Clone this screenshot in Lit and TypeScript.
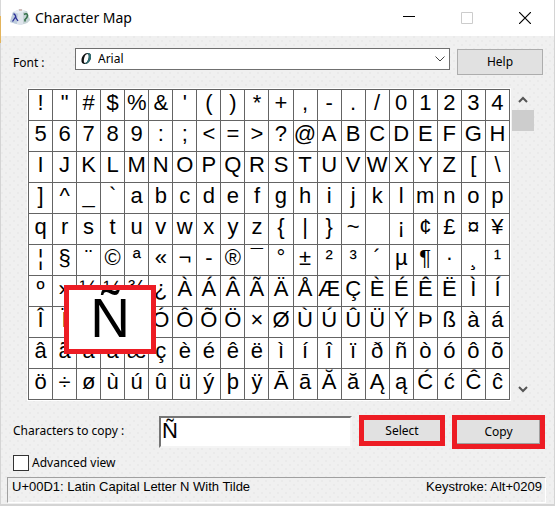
import { LitElement, html, css } from "lit";
import { customElement, state } from "lit/decorators.js";

const ROWS: string[] = [
  "!\"#$%&'()*+,-./01234",
  "56789:;<=>?@ABCDEFGH",
  "IJKLMNOPQRSTUVWXYZ[\\",
  "]^_`abcdefghijklmnop",
  "qrstuvwxyz{|}~\u00a0¡¢£¤¥",
  "¦§¨©ª«¬-®¯°±²³´µ¶·¸¹",
  "º»¼½¾¿ÀÁÂÃÄÅÆÇÈÉÊËÌÍ",
  "ÎÏÐÑÒÓÔÕÖ×ØÙÚÛÜÝÞßàá",
  "âãäåæçèéêëìíîïðñòóôõ",
  "ö÷øùúûüýþÿĀāĂăĄąĆćĈĉ",
];

@customElement("char-grid")
class CharGrid extends LitElement {
  static styles = css`
    :host {
      display: block;
      position: relative;
      flex: 1;
      min-width: 0;
      border: 1px solid #fff;
    }
    table {
      width: 100%;
      table-layout: fixed;
      border-spacing: 1px;
      background: #646464;
      font: 22px/30px "Liberation Sans", Arial, sans-serif;
      color: #000;
    }
    td {
      height: 30px;
      padding: 0;
      background: #fff;
      text-align: center;
      vertical-align: top;
    }
    .glyph {
      display: flex;
      justify-content: center;
      height: 30px;
      line-height: 26px;
    }
    .preview {
      position: absolute;
      left: 36px;
      top: 196px;
      width: 92px;
      height: 69px;
      box-sizing: border-box;
      border: 5px solid #ed1c24;
      background: #fff;
      overflow: hidden;
      text-align: center;
      font: 55px/56px "Liberation Sans", Arial, sans-serif;
    }
  `;
  render() {
    return html`
      <table aria-label="Characters">
        <tbody>
          ${ROWS.map(
            (row) => html`<tr>
              ${Array.from(row).map((c) => html`<td><span class="glyph">${c}</span></td>`)}
            </tr>`
          )}
        </tbody>
      </table>
      <div class="preview">Ñ</div>
    `;
  }
}

@customElement("app-root")
class AppRoot extends LitElement {
  @state() private text = "Ñ";

  static styles = css`
    :host {
      display: block;
      padding-left: 1px;
      background: linear-gradient(#d8d8d8 16px, #e3b45c 16px 43px, #d4d4d4 43px);
      font: 12px/16px "Noto Sans", "Open Sans", sans-serif;
      color: #000;
    }
    * {
      box-sizing: border-box;
    }
    .window {
      border: 1px solid #d4d4d4;
      border-width: 0 1px 2px 0;
      background-color: #f0f0f0;
      background-image: radial-gradient(circle at 1px 1px, #eaeaea 1px, transparent 1px),
        radial-gradient(circle at 1px 1px, #eaeaea 1px, transparent 1px);
      background-size: 8px 8px;
      background-position: 0 0, 4px 4px;
    }
    header {
      display: flex;
      align-items: center;
      height: 36px;
      padding-left: 8px;
      background: #fff;
    }
    .app-icon {
      width: 22px;
      height: 18px;
      margin-bottom: 3px;
    }
    h1 {
      flex: 1;
      margin: 0 0 0 4px;
      font-size: 14px;
      line-height: 20px;
      font-weight: 400;
    }
    .caption {
      display: grid;
      place-items: center;
      width: 58px;
      height: 34px;
      padding: 0;
      border: 0;
      background: none;
    }
    .font-row {
      display: flex;
      align-items: center;
      gap: 7px;
      padding: 12px 11px 0 12px;
    }
    .font-row label {
      width: 55px;
      padding-top: 2px;
    }
    .combo {
      position: relative;
      flex: 1;
      height: 22px;
      margin-bottom: 6px;
    }
    .combo select {
      width: 100%;
      height: 22px;
      appearance: none;
      border: 1px solid #707070;
      border-radius: 0;
      background: #fff;
      padding: 0 24px 0 22px;
      font: inherit;
      color: #000;
    }
    .font-mark {
      position: absolute;
      left: 5px;
      top: 4px;
    }
    .chevron {
      position: absolute;
      right: 5px;
      top: 8px;
    }
    button.push {
      width: 86px;
      height: 26px;
      padding: 0;
      border: 1px solid #adadad;
      background: #e1e1e1;
      font: inherit;
      color: #000;
    }
    .map {
      display: flex;
      gap: 1px;
      padding: 12px 20px 0 26px;
    }
    .scroll {
      display: flex;
      flex-direction: column;
      align-items: center;
      width: 22px;
      padding: 8px 0;
    }
    .thumb {
      width: 22px;
      height: 21px;
      margin: 7px 0 auto;
      background: #cdcdcd;
    }
    .copy-row {
      display: flex;
      align-items: flex-start;
      gap: 7px;
      padding: 14px 9px 0 12px;
    }
    .copy-row label {
      width: 139px;
      padding-top: 8px;
    }
    .copy-row input {
      flex: 1;
      min-width: 0;
      height: 32px;
      margin-top: 1px;
      padding: 0 1px 2px;
      border: 2px solid;
      border-color: #757575 #f4f4f4 #f4f4f4 #757575;
      outline: 0;
      background: #fff;
      font: 22px/26px "Liberation Sans", Arial, sans-serif;
      color: #000;
    }
    .copy-row button.marked {
      height: 31px;
      border: 5px solid #ed1c24;
    }
    .copy-row button.framed {
      width: 93px;
      height: 34px;
      box-shadow: inset -1px -1px #a0a0a0;
    }
    .advanced {
      display: flex;
      align-items: center;
      gap: 3px;
      padding: 6px 12px;
    }
    .advanced input {
      appearance: none;
      width: 16px;
      height: 16px;
      margin: 0;
      border: 1px solid #333;
      background: #fff;
    }
    footer {
      display: flex;
      justify-content: space-between;
      height: 26px;
      margin: 0 8px 1px 6px;
      padding: 1px 3px 0 4px;
      border: 1px solid;
      border-color: #a0a0a0 #fff #fff #a0a0a0;
      font: 13px/16px "Liberation Sans", Arial, sans-serif;
    }
  `;

  render() {
    return html`
      <main class="window">
        <header>
          <svg class="app-icon" viewBox="0 0 22 18" aria-hidden="true">
            <path d="M4 4l7-3 6 2 4 9-3 3-6 2-5-1-6-2z" fill="#d3dbe4" />
            <path d="M4 4l7-3 6 2-6 3z" fill="#e9eef3" />
            <path d="M4 4l5 2-1 10-7-2z" fill="#bccbdc" />
            <path d="M9 5l5-1 1 11-3 2-4-1z" fill="#dfe5ec" />
            <path d="M14 4l4-1 3 9-3 3-4 1z" fill="#c6d3d6" />
            <path d="M10 2l3 0" stroke="#b98f84" />
            <path d="M4.500 6q2 0 2.500 4l2 3M6.500 9l-3 4.500" fill="none" stroke="#2b2f98" stroke-width="1.300" />
            <path d="M15 6.500q3-2 3.500 1 0 2-2.500 4v2" fill="none" stroke="#35714a" stroke-width="1.600" />
          </svg>
          <h1>Character Map</h1>
          <button class="caption" aria-label="Minimize">
            <svg width="12" height="12"><path d="M0 4.500h12" stroke="#000" /></svg>
          </button>
          <button class="caption" aria-label="Maximize" disabled>
            <svg width="12" height="12">
              <path d="M.5.5h11v11H.5z" fill="none" stroke="#ccc" />
            </svg>
          </button>
          <button class="caption" aria-label="Close">
            <svg width="12" height="12"><path d="M0 0l12 12M12 0L0 12" stroke="#000" stroke-width="1.2" /></svg>
          </button>
        </header>

        <div class="font-row">
          <label for="font">Font :</label>
          <div class="combo">
            <select id="font">
              <option>Arial</option>
            </select>
            <svg class="font-mark" width="13" height="13" aria-hidden="true">
              <path
                fill-rule="evenodd"
                d="M7.500 1C10 1 11.500 2.400 11 5.500 10.500 9 8 12 5 12 2.500 12 1 10.500 1.500 7.500 2 4 4.500 1 7.500 1zM7.500 1.900C5.500 1.900 4.200 5 3.900 7.500 3.600 10 4 11 5.200 11 7 11 8.300 8 8.700 5.500 9 3 8.500 1.900 7.500 1.900z"
                fill="#111"
              />
              <path d="M7.500 1C10 1 11.500 2.400 11 5.500 10.500 9 8 12 5 12V11C7 11 8.300 8 8.700 5.500 9 3 8.500 1.900 7.500 1.900z" fill="#2c6e73" />
            </svg>
            <svg class="chevron" width="10" height="6" aria-hidden="true">
              <path d="M.5.5L5 5 9.500.5" fill="none" stroke="#444" />
            </svg>
          </div>
          <button class="push">Help</button>
        </div>

        <div class="map">
          <char-grid></char-grid>
          <div class="scroll" aria-hidden="true">
            <svg width="10" height="7"><path d="M1 6l4-4 4 4" fill="none" stroke="#555" stroke-width="2" /></svg>
            <div class="thumb"></div>
            <svg width="10" height="7"><path d="M1 1l4 4 4-4" fill="none" stroke="#555" stroke-width="2" /></svg>
          </div>
        </div>

        <div class="copy-row">
          <label for="copy">Characters to copy :</label>
          <input
            id="copy"
            type="text"
            .value=${this.text}
            @input=${(e: Event) => (this.text = (e.target as HTMLInputElement).value)}
          />
          <button class="push marked">Select</button>
          <button class="push marked framed">Copy</button>
        </div>

        <div class="advanced">
          <input id="advanced" type="checkbox" />
          <label for="advanced">Advanced view</label>
        </div>

        <footer>
          <span>U+00D1: Latin Capital Letter N With Tilde</span>
          <span>Keystroke: Alt+0209</span>
        </footer>
      </main>
    `;
  }
}
